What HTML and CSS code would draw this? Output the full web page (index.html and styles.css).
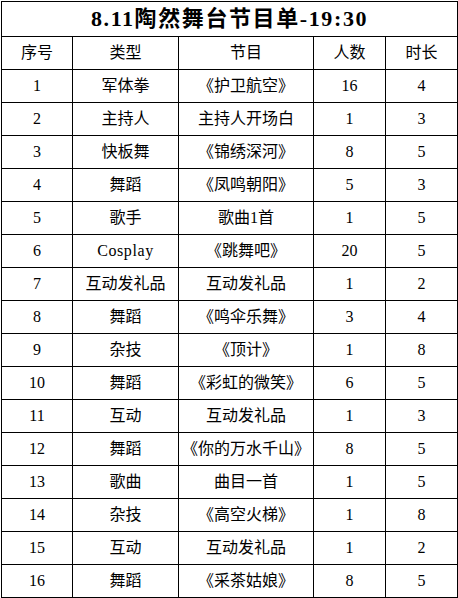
FILE: index.html
```html
<!DOCTYPE html>
<html lang="zh">
<head>
<meta charset="utf-8">
<link rel="stylesheet" href="styles.css">
</head>
<body>
<div class="wrap">
<table class="sheet">
<colgroup>
<col class="c1"><col class="c2"><col class="c3"><col class="c4"><col class="c5">
</colgroup>
<tr class="title-row"><td colspan="5" class="title">8.11陶然舞台节目单-19:30</td></tr>
<tr><td>序号</td><td>类型</td><td>节目</td><td>人数</td><td>时长</td></tr>
<tr><td>1</td><td>军体拳</td><td>《护卫航空》</td><td>16</td><td>4</td></tr>
<tr><td>2</td><td>主持人</td><td>主持人开场白</td><td>1</td><td>3</td></tr>
<tr><td>3</td><td>快板舞</td><td>《锦绣深河》</td><td>8</td><td>5</td></tr>
<tr><td>4</td><td>舞蹈</td><td>《凤鸣朝阳》</td><td>5</td><td>3</td></tr>
<tr><td>5</td><td>歌手</td><td>歌曲1首</td><td>1</td><td>5</td></tr>
<tr><td>6</td><td class="latin">Cosplay</td><td>《跳舞吧》</td><td>20</td><td>5</td></tr>
<tr><td>7</td><td>互动发礼品</td><td>互动发礼品</td><td>1</td><td>2</td></tr>
<tr><td>8</td><td>舞蹈</td><td>《鸣伞乐舞》</td><td>3</td><td>4</td></tr>
<tr><td>9</td><td>杂技</td><td>《顶计》</td><td>1</td><td>8</td></tr>
<tr><td>10</td><td>舞蹈</td><td>《彩虹的微笑》</td><td>6</td><td>5</td></tr>
<tr><td>11</td><td>互动</td><td>互动发礼品</td><td>1</td><td>3</td></tr>
<tr><td>12</td><td>舞蹈</td><td>《你的万水千山》</td><td>8</td><td>5</td></tr>
<tr><td>13</td><td>歌曲</td><td>曲目一首</td><td>1</td><td>5</td></tr>
<tr><td>14</td><td>杂技</td><td>《高空火梯》</td><td>1</td><td>8</td></tr>
<tr><td>15</td><td>互动</td><td>互动发礼品</td><td>1</td><td>2</td></tr>
<tr><td>16</td><td>舞蹈</td><td>《采茶姑娘》</td><td>8</td><td>5</td></tr>
</table>
</div>
</body>
</html>
```
FILE: styles.css
```css
html, body {
  margin: 0;
  padding: 0;
  background: #fff;
}
.wrap {
  padding: 1px 0 0 1px;
}
.sheet {
  border-collapse: collapse;
  table-layout: fixed;
  width: 456px;
  font-family: "Liberation Serif", "Noto Sans CJK SC", serif;
  font-size: 16px;
  color: #000;
}
.c1 { width: 71px; }
.c2 { width: 106px; }
.c3 { width: 135px; }
.c4 { width: 72px; }
.c5 { width: 72px; }
.sheet td {
  border: 1px solid #000;
  height: 32px;
  padding: 0;
  text-align: center;
  vertical-align: middle;
  line-height: 1;
  white-space: nowrap;
}
.sheet .title-row td {
  height: 34px;
}
.title {
  font-size: 22px;
  font-weight: bold;
  letter-spacing: 1.6px;
  padding-left: 2px;
}
.latin {
  letter-spacing: 0.6px;
}
```
